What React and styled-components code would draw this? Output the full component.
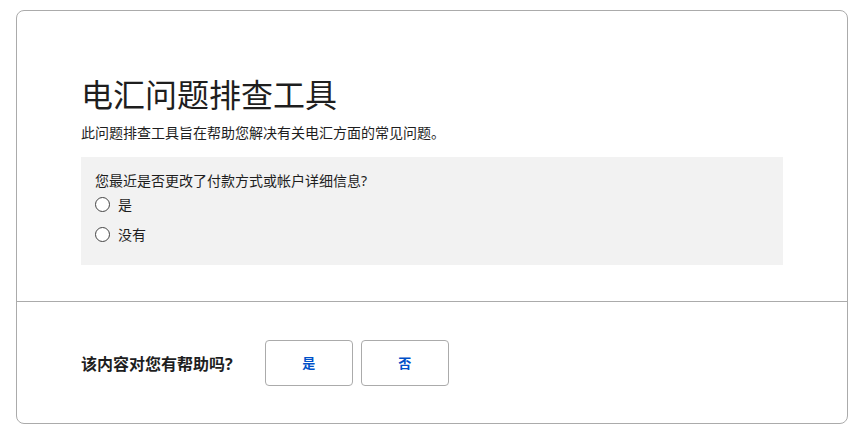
import React from "react";
import styled, { createGlobalStyle } from "styled-components";

const Global = createGlobalStyle`
  html, body { margin: 0; padding: 0; background: #fff; }
  body {
    font-family: "Segoe UI", "Noto Sans", "Noto Sans CJK SC", sans-serif;
    color: #1e1e1e;
  }
  * { box-sizing: border-box; }
`;

const Page = styled.div`
  padding: 10px 4px 5px 16px;
`;

const Card = styled.section`
  width: 832px;
  height: 414px;
  border: 1px solid #ababab;
  border-radius: 8px;
  display: flex;
  flex-direction: column;
  overflow: hidden;
`;

const Top = styled.div`
  height: 290px;
  padding: 62px 64px 0 64px;
  display: flex;
  flex-direction: column;
`;

const Title = styled.h1`
  margin: 0;
  font-size: 32px;
  font-weight: 400;
  line-height: 44px;
  color: #1e1e1e;
`;

const Subtitle = styled.p`
  margin: 6px 0 0 0;
  font-size: 14px;
  line-height: 20px;
  color: #1e1e1e;
`;

const QuestionBox = styled.div`
  margin-top: 14px;
  background: #f2f2f2;
  height: 108px;
  padding: 15px 14px 0 14px;
  display: flex;
  flex-direction: column;
`;

const Question = styled.div`
  font-size: 14px;
  line-height: 17px;
`;

const Option = styled.label`
  display: flex;
  align-items: center;
  gap: 8px;
  height: 30px;
  font-size: 14px;
`;

const Circle = styled.span`
  width: 15px;
  height: 15px;
  border: 1px solid #444;
  border-radius: 50%;
  background: #fff;
  flex: none;
`;

const Bottom = styled.div`
  flex: 1;
  border-top: 1px solid #ababab;
  display: flex;
  align-items: center;
  padding-left: 64px;
`;

const Prompt = styled.div`
  font-size: 16px;
  font-weight: 700;
  color: #1e1e1e;
  margin-right: 32px;
`;

const Buttons = styled.div`
  display: flex;
  gap: 8px;
`;

const Btn = styled.button`
  width: 88px;
  height: 46px;
  border: 1px solid #ababab;
  border-radius: 4px;
  background: #fff;
  font-family: inherit;
  font-size: 13px;
  font-weight: 600;
  color: #0050c8;
  cursor: pointer;
`;

export default function App() {
  return (
    <Page>
      <Global />
      <Card>
        <Top>
          <Title>电汇问题排查工具</Title>
          <Subtitle>此问题排查工具旨在帮助您解决有关电汇方面的常见问题。</Subtitle>
          <QuestionBox>
            <Question>您最近是否更改了付款方式或帐户详细信息?</Question>
            <Option><Circle />是</Option>
            <Option><Circle />没有</Option>
          </QuestionBox>
        </Top>
        <Bottom>
          <Prompt>该内容对您有帮助吗?</Prompt>
          <Buttons>
            <Btn>是</Btn>
            <Btn>否</Btn>
          </Buttons>
        </Bottom>
      </Card>
    </Page>
  );
}
